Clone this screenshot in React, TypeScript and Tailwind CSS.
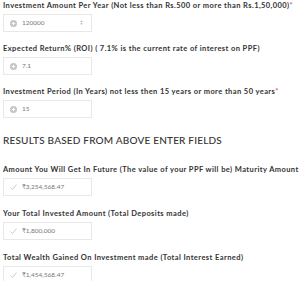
import React from 'react';

const PlusIcon = () => (
  <svg width="7" height="7" viewBox="0 0 14 14" className="shrink-0">
    <circle cx="7" cy="7" r="7" fill="#c4c4c4" />
    <path d="M7 3.5v7M3.5 7h7" stroke="#fff" strokeWidth="2" />
  </svg>
);

const CheckIcon = () => (
  <svg width="7" height="6" viewBox="0 0 14 12" className="shrink-0">
    <path d="M1 7l4 4L13 1" fill="none" stroke="#b9c7b0" strokeWidth="1.6" />
  </svg>
);

const Field: React.FC<{ label: string; value: string; required?: boolean; result?: boolean; spinner?: boolean }> = ({
  label,
  value,
  required,
  result,
  spinner,
}) => (
  <div className="flex flex-col">
    <div className="text-[7.5px] font-bold text-[#333] leading-[9px] tracking-[0.42px] whitespace-nowrap">
      {label}
      {required && <span className="text-[#e06060]">*</span>}
    </div>
    <div className="mt-[4px] flex items-center w-[89px] h-[18px] border border-[#e8e8e8] bg-white px-[6px] gap-[5px]">
      {result ? <CheckIcon /> : <PlusIcon />}
      <span className="text-[6.5px] text-[#777]">{value}</span>
      {spinner && (
        <span className="ml-auto flex flex-col text-[3px] leading-[3px] text-[#999] pr-[2px]">
          <span>▲</span>
          <span>▼</span>
        </span>
      )}
    </div>
  </div>
);

export default function App() {
  return (
    <div className="w-[300px] h-[281px] bg-white overflow-hidden pl-[3px] pt-[1px]" style={{ fontFamily: 'Lato, "Open Sans", sans-serif' }}>
      <div className="flex flex-col gap-[12px]">
        <Field
          label="Investment Amount Per Year (Not less than Rs.500 or more than Rs.1,50,000)"
          required
          value="120000"
          spinner
        />
        <Field label="Expected Return% (ROI) ( 7.1% is the current rate of interest on PPF)" value="7.1" />
        <Field label="Investment Period (In Years) not less then 15 years or more than 50 years" required value="15" />
      </div>
      <h2 className="mt-[16px] text-[10px] font-medium text-[#333] tracking-[0.2px] leading-[12px]">
        RESULTS BASED FROM ABOVE ENTER FIELDS
      </h2>
      <div className="mt-[19px] flex flex-col gap-[13px]">
        <Field label="Amount You Will Get In Future (The value of your PPF will be) Maturity Amount" value="₹3,254,568.47" result />
        <Field label="Your Total Invested Amount (Total Deposits made)" value="₹1,800,000" result />
        <Field label="Total Wealth Gained On Investment made (Total Interest Earned)" value="₹1,454,568.47" result />
      </div>
    </div>
  );
}
